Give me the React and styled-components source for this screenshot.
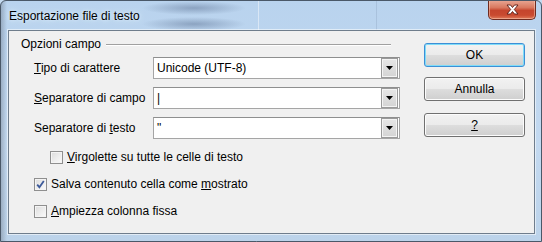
import styled, { createGlobalStyle } from 'styled-components'

const GlobalStyle = createGlobalStyle`
  html, body {
    margin: 0;
    padding: 0;
    background: #c4daf0;
  }
  body {
    font-family: "Liberation Sans", Arial, sans-serif;
    font-size: 12px;
    color: #000;
  }
`

const fields = [
  { label: 'Tipo di carattere', key: 0, value: 'Unicode (UTF-8)' },
  { label: 'Separatore di campo', key: 0, value: '|' },
  { label: 'Separatore di testo', key: 14, value: '"' },
]

const checks = [
  { text: 'Virgolette su tutte le celle di testo', key: 0, indent: true, checked: false },
  { text: 'Salva contenuto cella come mostrato', key: 27, indent: false, checked: true },
  { text: 'Ampiezza colonna fissa', key: 0, indent: false, checked: false },
]

// underline the access key letter, like the win32 dialogs do
const Mnemonic = ({ text, at }) => (
  <>
    {text.slice(0, at)}
    <u>{text[at]}</u>
    {text.slice(at + 1)}
  </>
)

const CloseIcon = () => (
  <svg width="13" height="11" viewBox="0 0 13 11">
    <path
      d="M1 1 H4.5 L6.5 3.5 L8.5 1 H12 L8.3 5.5 L12 10 H8.5 L6.5 7.5 L4.5 10 H1 L4.7 5.5 Z"
      fill="#fff"
      stroke="#5a1c14"
      strokeWidth="0.9"
      strokeLinejoin="round"
    />
  </svg>
)

const ArrowIcon = () => (
  <svg width="7" height="4" viewBox="0 0 7 4">
    <path d="M0 0 H7 L3.5 4 Z" fill="#000" />
  </svg>
)

const CheckMark = () => (
  <svg width="9" height="9" viewBox="0 0 9 9">
    <path d="M1.2 4.6 L3.4 7.2 L7.8 1" fill="none" stroke="#3d5a9a" strokeWidth="1.8" />
  </svg>
)

const App = () => {
  return (
    <>
      <GlobalStyle />
      <Window>
        <TitleBar>
          <Title>Esportazione file di testo</Title>
          <CloseButton>
            <CloseIcon />
          </CloseButton>
        </TitleBar>
        <Client>
          <LeftPane>
            <SectionHeader>
              <SectionTitle>Opzioni campo</SectionTitle>
              <SectionLine />
            </SectionHeader>
            <Fields>
              {fields.map(f => (
                <FieldRow key={f.label}>
                  <FieldLabel>
                    <Mnemonic text={f.label} at={f.key} />
                  </FieldLabel>
                  <Combo>
                    <ComboValue>{f.value}</ComboValue>
                    <DropButton>
                      <ArrowIcon />
                    </DropButton>
                  </Combo>
                </FieldRow>
              ))}
            </Fields>
            <Checks>
              {checks.map(c => (
                <CheckRow key={c.text} $indent={c.indent}>
                  <CheckBox>{c.checked && <CheckMark />}</CheckBox>
                  <CheckText>
                    <Mnemonic text={c.text} at={c.key} />
                  </CheckText>
                </CheckRow>
              ))}
            </Checks>
          </LeftPane>
          <RightPane>
            <Button $default>OK</Button>
            <Button $top={10}>Annulla</Button>
            <Button $top={12}>
              <u>?</u>
            </Button>
          </RightPane>
        </Client>
      </Window>
    </>
  )
}

const Window = styled.div`
  box-sizing: border-box;
  width: 542px;
  height: 242px;
  border: 1px solid #4a5868;
  border-radius: 6px 6px 0 0;
  background:
    linear-gradient(to right, rgba(90, 100, 115, 0.35) 0, transparent 6px),
    linear-gradient(to bottom, #b9d3ee 0%, #c3d9f0 60%, #bcd3ea 100%);
  display: flex;
  flex-direction: column;
  overflow: hidden;
`

const TitleBar = styled.div`
  height: 29px;
  display: flex;
  align-items: flex-start;
  justify-content: space-between;
  background:
    radial-gradient(ellipse 52px 7px at 193px 7px, rgba(70, 90, 125, 0.4), transparent),
    radial-gradient(ellipse 52px 7px at 193px 23px, rgba(70, 90, 125, 0.4), transparent),
    linear-gradient(to right, transparent 257px, rgba(255, 255, 255, 0.45) 257px, rgba(255, 255, 255, 0.45) 258px, transparent 258px),
    linear-gradient(to right, transparent 375px, rgba(120, 140, 170, 0.25) 375px, rgba(120, 140, 170, 0.25) 376px, transparent 376px);
`

const Title = styled.span`
  margin: 8px 0 0 8px;
  line-height: 14px;
  font-size: 12px;
  text-shadow: 0 0 6px #ddeeff, 0 0 3px #ddeeff;
`

const CloseButton = styled.div`
  box-sizing: border-box;
  width: 48px;
  height: 20px;
  margin: -1px 5px 0 0;
  border: 1px solid #6e2b20;
  border-top: none;
  border-radius: 0 0 5px 5px;
  display: flex;
  align-items: center;
  justify-content: center;
  background: linear-gradient(to bottom, #e9a996 0%, #d8785f 40%, #c5452d 55%, #c94a30 80%, #e07a5a 100%);
  box-shadow: inset 0 0 0 1px rgba(255, 220, 200, 0.45);
`

const Client = styled.div`
  flex: 1;
  margin: 0 6px 7px 7px;
  border: 1px solid #6f7d8c;
  background: #f0f0f0;
  display: flex;
  box-shadow: 0 0 0 1px rgba(255, 255, 255, 0.55);
`

const LeftPane = styled.div`
  width: 380px;
  padding: 6px 0 0 12px;
  display: flex;
  flex-direction: column;
`

const SectionHeader = styled.div`
  height: 14px;
  width: 370px;
  display: flex;
  align-items: center;
`

const SectionTitle = styled.span`
  line-height: 14px;
`

const SectionLine = styled.div`
  flex: 1;
  height: 1px;
  margin-left: 5px;
  background: #a0a0a0;
  box-shadow: 0 1px 0 #fff;
`

const Fields = styled.div`
  margin-top: 6px;
  padding-left: 13px;
  display: flex;
  flex-direction: column;
  gap: 8px;
`

const FieldRow = styled.div`
  height: 22px;
  display: flex;
  align-items: center;
`

const FieldLabel = styled.span`
  width: 119px;
  white-space: nowrap;
`

const Combo = styled.div`
  box-sizing: border-box;
  width: 247px;
  height: 22px;
  border: 1px solid #a5a5a5;
  border-top-color: #8e8f8f;
  background: #fff;
  display: flex;
  align-items: center;
  justify-content: space-between;
  padding: 0 1px 0 3px;
`

const ComboValue = styled.span`
  white-space: nowrap;
`

const DropButton = styled.div`
  box-sizing: border-box;
  width: 17px;
  height: 20px;
  border: 1px solid #9a9a9a;
  background: linear-gradient(to bottom, #e6e6e6, #d4d4d4);
  box-shadow: inset 0 0 0 1px #f4f4f4;
  display: flex;
  align-items: center;
  justify-content: center;
`

const Checks = styled.div`
  margin-top: 10px;
  padding-left: 13px;
  display: flex;
  flex-direction: column;
  gap: 11px;
`

const CheckRow = styled.div`
  height: 16px;
  display: flex;
  align-items: center;
  padding-left: ${props => (props.$indent ? '16px' : '0')};
`

const CheckBox = styled.div`
  box-sizing: border-box;
  width: 13px;
  height: 13px;
  border: 1px solid #8f8f8f;
  background: linear-gradient(135deg, #dcdcdc, #fbfbfb);
  box-shadow: inset 0 0 0 1px #f4f4f4;
  display: flex;
  align-items: center;
  justify-content: center;
  margin-right: 4px;
`

const CheckText = styled.span`
  white-space: nowrap;
  line-height: 14px;
`

const RightPane = styled.div`
  margin-left: 23px;
  padding-top: 12px;
  display: flex;
  flex-direction: column;
`

const Button = styled.div`
  box-sizing: border-box;
  width: 101px;
  height: 24px;
  margin-top: ${props => props.$top || 0}px;
  border: 1px solid ${props => (props.$default ? '#3c8fd6' : '#707070')};
  border-radius: 3px;
  background: linear-gradient(to bottom, #f2f2f2 0%, #ebebeb 48%, #dddddd 52%, #cfcfcf 100%);
  box-shadow: inset 0 0 0 1px ${props => (props.$default ? '#7fdcf8' : '#fcfcfc')};
  display: flex;
  align-items: center;
  justify-content: center;
`

export default App
